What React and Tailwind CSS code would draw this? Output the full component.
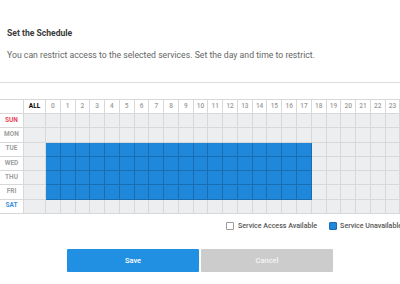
import React from "react";

const days = [
  { name: "SUN", color: "text-[#e8475a]" },
  { name: "MON", color: "text-[#a0a0a0]" },
  { name: "TUE", color: "text-[#a0a0a0]" },
  { name: "WED", color: "text-[#a0a0a0]" },
  { name: "THU", color: "text-[#a0a0a0]" },
  { name: "FRI", color: "text-[#a0a0a0]" },
  { name: "SAT", color: "text-[#3b8fe0]" },
];

const hours = Array.from({ length: 24 }, (_, i) => i);

function isBlocked(d, h) {
  return d >= 2 && d <= 5 && h <= 17;
}

export default function App() {
  return (
    <div
      className="w-[400px] h-[284px] overflow-hidden bg-white"
      style={{ fontFamily: "Roboto, 'Liberation Sans', sans-serif" }}
    >
      <div className="pt-[28px] px-[7px]">
        <div className="text-[8.6px] font-bold text-[#3a3a3a] leading-[10px]">
          Set the Schedule
        </div>
        <div className="mt-[12px] text-[8.7px] text-[#666] leading-[10px] whitespace-nowrap">
          You can restrict access to the selected services. Set the day and time to restrict.
        </div>
      </div>
      <div className="mt-[22px] h-px bg-[#dcdcdc] w-full" />
      <div className="mt-[16px] w-[420px] border-t border-[#d8d8d8]">
        <div className="grid grid-cols-[24px_22px_repeat(24,14.77px)] grid-rows-[14px_repeat(7,14.25px)]">
          <div className="border-r border-b border-[#d8d8d8] bg-white" />
          <div className="border-r border-b border-[#d8d8d8] bg-white flex items-center justify-center text-[6.5px] font-bold text-black">
            ALL
          </div>
          {hours.map((h) => (
            <div
              key={h}
              className="border-r border-b border-[#d8d8d8] bg-white flex items-center justify-center text-[6.5px] font-medium text-[#9a9a9a]"
            >
              {h}
            </div>
          ))}
          {days.map((d, di) => (
            <React.Fragment key={d.name}>
              <div
                className={`border-r border-b border-[#d8d8d8] bg-white flex items-center justify-center text-[6.5px] font-bold ${d.color}`}
              >
                {d.name}
              </div>
              <div className="border-r border-b border-[#d8d8d8] bg-[#eceef0]" />
              {hours.map((h) =>
                isBlocked(di, h) ? (
                  <div
                    key={h}
                    className="border-r border-b border-[#1a6db3] bg-[#2088da]"
                  />
                ) : (
                  <div
                    key={h}
                    className="border-r border-b border-[#d8d8d8] bg-[#eceef0]"
                  />
                )
              )}
            </React.Fragment>
          ))}
        </div>
      </div>
      <div className="mt-[7px] flex items-center pl-[226px] w-[480px] text-[7.1px] font-medium text-[#555]">
        <div className="w-[8px] h-[8px] border border-[#9a9a9a] bg-white rounded-[1px]" />
        <span className="ml-[4px] whitespace-nowrap">Service Access Available</span>
        <div className="ml-[12px] w-[8px] h-[8px] border border-[#1a6db3] bg-[#2088da] rounded-[1px]" />
        <span className="ml-[3px] whitespace-nowrap">Service Unavailable</span>
      </div>
      <div className="mt-[18px] flex justify-center gap-[2px]">
        <button className="w-[132px] h-[23px] bg-[#2290e2] text-white text-[7.5px] font-medium rounded-[1px]">
          Save
        </button>
        <button className="w-[132px] h-[23px] bg-[#cccccc] text-[#f4f4f4] text-[7.5px] font-medium rounded-[1px]">
          Cancel
        </button>
      </div>
    </div>
  );
}
